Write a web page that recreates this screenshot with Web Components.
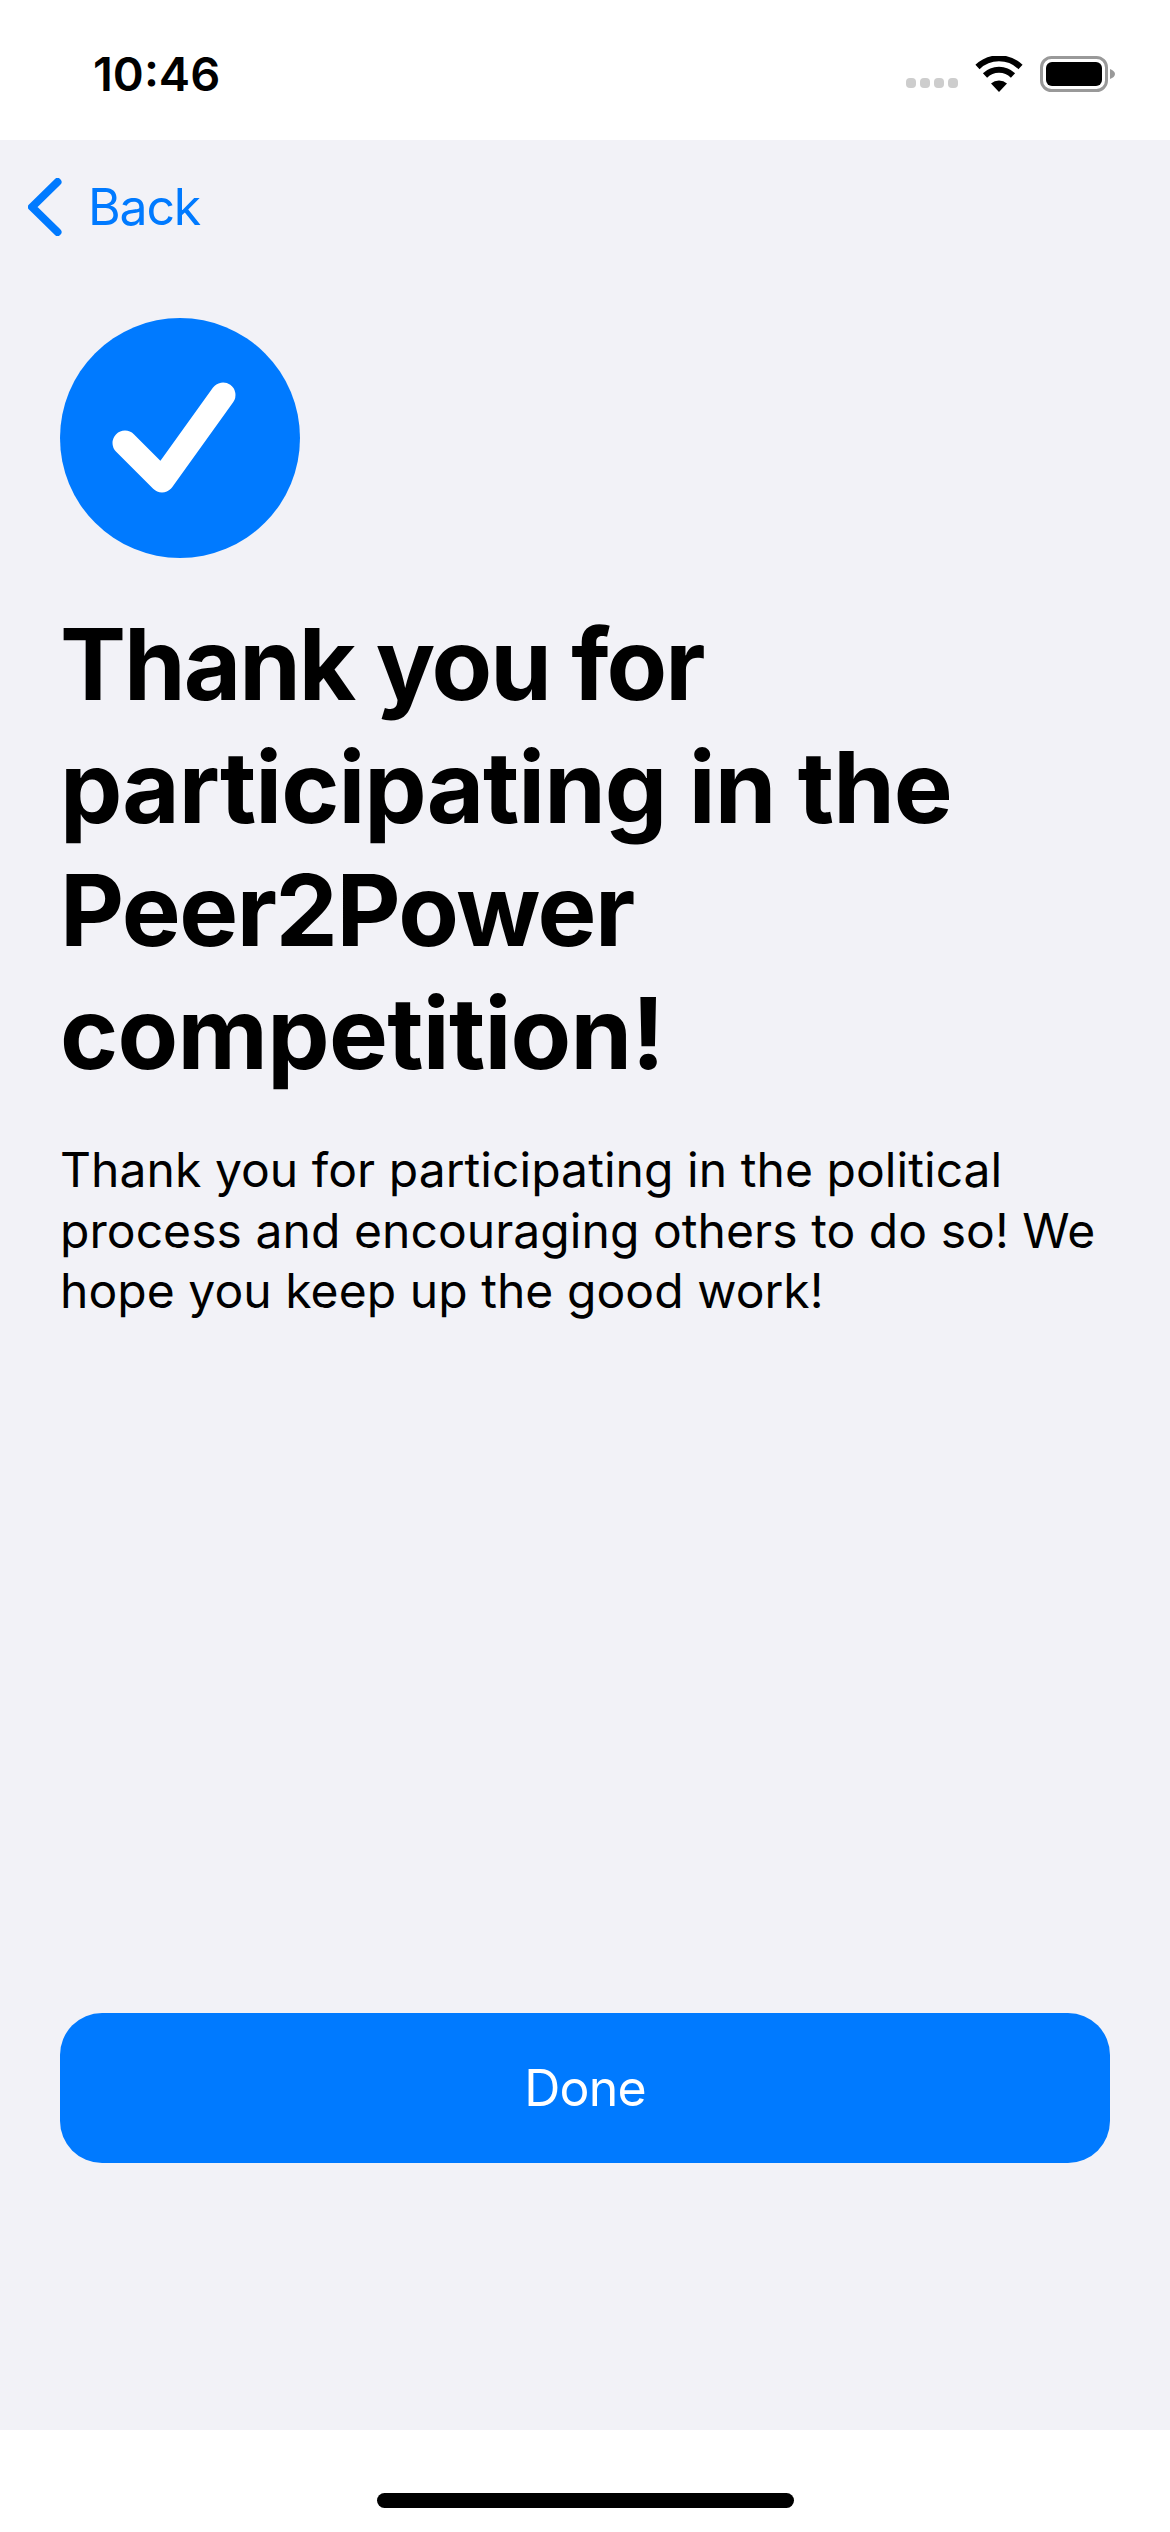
<!DOCTYPE html>
<html>
<head>
<meta charset="utf-8">
<style>
    html, body { margin: 0; padding: 0; }
    body { width: 1170px; height: 2532px; font-family: 'Inter', sans-serif; background: #fff; }
    thanks-screen { height: 2532px; }
</style>
</head>
<body>
<thanks-screen>
    <status-bar slot="status" time="10:46"></status-bar>
    <back-link slot="nav">Back</back-link>
    <check-badge slot="main"></check-badge>
    <h1 slot="main"><span style="letter-spacing:-2px">Thank you for</span> participating in the <span style="letter-spacing:-1.5px">Peer2Power</span> <span style="letter-spacing:-.7px">competition!</span></h1>
    <p slot="main">Thank you for participating in the political process and encouraging others to do so! We hope you keep up the good work!</p>
    <done-button slot="action">Done</done-button>
</thanks-screen>
<script>
class StatusBar extends HTMLElement {
    connectedCallback() {
        this.attachShadow({ mode: 'open' });
        this.shadowRoot.innerHTML = `
            <style>
                :host {
                    display: flex;
                    align-items: center;
                    justify-content: space-between;
                    height: 140px;
                    background: #fff;
                    padding: 7px 62px 0 93px;
                    box-sizing: border-box;
                    color: #000;
                }
                .time { font: 600 47px 'Inter', sans-serif; }
                .icons { display: flex; align-items: center; gap: 17px; }
                .dots { display: flex; gap: 4px; margin-top: 18px; }
                .dots i { width: 10px; height: 10px; border-radius: 4px; background: #cdcdcd; }
            </style>
            <span class="time">${this.getAttribute('time')}</span>
            <div class="icons">
                <div class="dots"><i></i><i></i><i></i><i></i></div>
                <svg width="48" height="36" viewBox="0 0 48 36">
                    <path d="M24 36 L16 27.500 a12 12 0 0 1 16 0 Z" fill="#000"/>
                    <path d="M10 19.500 a20 20 0 0 1 28 0" fill="none" stroke="#000" stroke-width="6"/>
                    <path d="M2.500 11 a31 31 0 0 1 43 0" fill="none" stroke="#000" stroke-width="6"/>
                </svg>
                <svg width="75" height="36" viewBox="0 0 75 36" style="margin-right:-7px">
                    <rect x="1.500" y="1.500" width="65" height="33" rx="10" fill="none" stroke="#999" stroke-width="3"/>
                    <rect x="6" y="6" width="56" height="24" rx="6" fill="#000"/>
                    <path d="M70 13 c3 1 5 3 5 5 s-2 4 -5 5 Z" fill="#999"/>
                </svg>
            </div>
        `;
    }
}

class BackLink extends HTMLElement {
    connectedCallback() {
        this.attachShadow({ mode: 'open' });
        this.shadowRoot.innerHTML = `
            <style>
                :host {
                    display: flex;
                    align-items: center;
                    gap: 25px;
                    height: 134px;
                    padding-left: 28px;
                    color: #007aff;
                    font: 400 50px 'Inter', sans-serif;
                    letter-spacing: -1.2px;
                }
            </style>
            <svg width="35" height="58" viewBox="0 0 35 58">
                <path d="M29.500 4 L4 29 L29.500 54" fill="none" stroke="#007aff" stroke-width="8" stroke-linecap="round" stroke-linejoin="round"/>
            </svg>
            <slot></slot>
        `;
    }
}

class CheckBadge extends HTMLElement {
    connectedCallback() {
        this.attachShadow({ mode: 'open' });
        this.shadowRoot.innerHTML = `
            <style>
                :host {
                    display: flex;
                    align-items: center;
                    justify-content: center;
                    width: 240px;
                    height: 240px;
                    border-radius: 50%;
                    background: #007aff;
                }
            </style>
            <svg width="240" height="240" viewBox="0 0 240 240">
                <path d="M65 125 L102 162 L163 77" fill="none" stroke="#fff" stroke-width="25" stroke-linecap="round" stroke-linejoin="round"/>
            </svg>
        `;
    }
}

class DoneButton extends HTMLElement {
    connectedCallback() {
        this.attachShadow({ mode: 'open' });
        this.shadowRoot.innerHTML = `
            <style>
                :host {
                    display: flex;
                    align-items: center;
                    justify-content: center;
                    height: 150px;
                    border-radius: 42px;
                    background: #007aff;
                    color: #fff;
                    font: 400 50px 'Inter', sans-serif;
                    letter-spacing: -0.8px;
                }
            </style>
            <slot></slot>
        `;
    }
}

class ThanksScreen extends HTMLElement {
    connectedCallback() {
        this.attachShadow({ mode: 'open' });
        this.shadowRoot.innerHTML = `
            <style>
                :host {
                    display: flex;
                    flex-direction: column;
                    width: 1170px;
                    background: #f2f2f7;
                }
                .body { flex: 1; display: flex; flex-direction: column; min-height: 0; }
                .main { flex: 1; padding: 44px 60px 0 60px; }
                .action { padding: 0 60px 267px 60px; }
                .home { height: 102px; background: #fff; display: flex; justify-content: center; }
                .home i { width: 417px; height: 15px; margin-top: 63px; border-radius: 8px; background: #000; }
                ::slotted(h1) { font: 700 99px/123px 'Inter', sans-serif; color: #000; margin: 45px 0 0 0; letter-spacing: -1px; }
                ::slotted(p) { font: 400 48px/60.5px 'Inter', sans-serif; color: #000; margin: 45px 0 0 0; letter-spacing: .06px; }
            </style>
            <slot name="status"></slot>
            <div class="body">
                <slot name="nav"></slot>
                <div class="main"><slot name="main"></slot></div>
                <div class="action"><slot name="action"></slot></div>
            </div>
            <div class="home"><i></i></div>
        `;
    }
}

customElements.define('status-bar', StatusBar);
customElements.define('back-link', BackLink);
customElements.define('check-badge', CheckBadge);
customElements.define('done-button', DoneButton);
customElements.define('thanks-screen', ThanksScreen);
</script>
</body>
</html>
